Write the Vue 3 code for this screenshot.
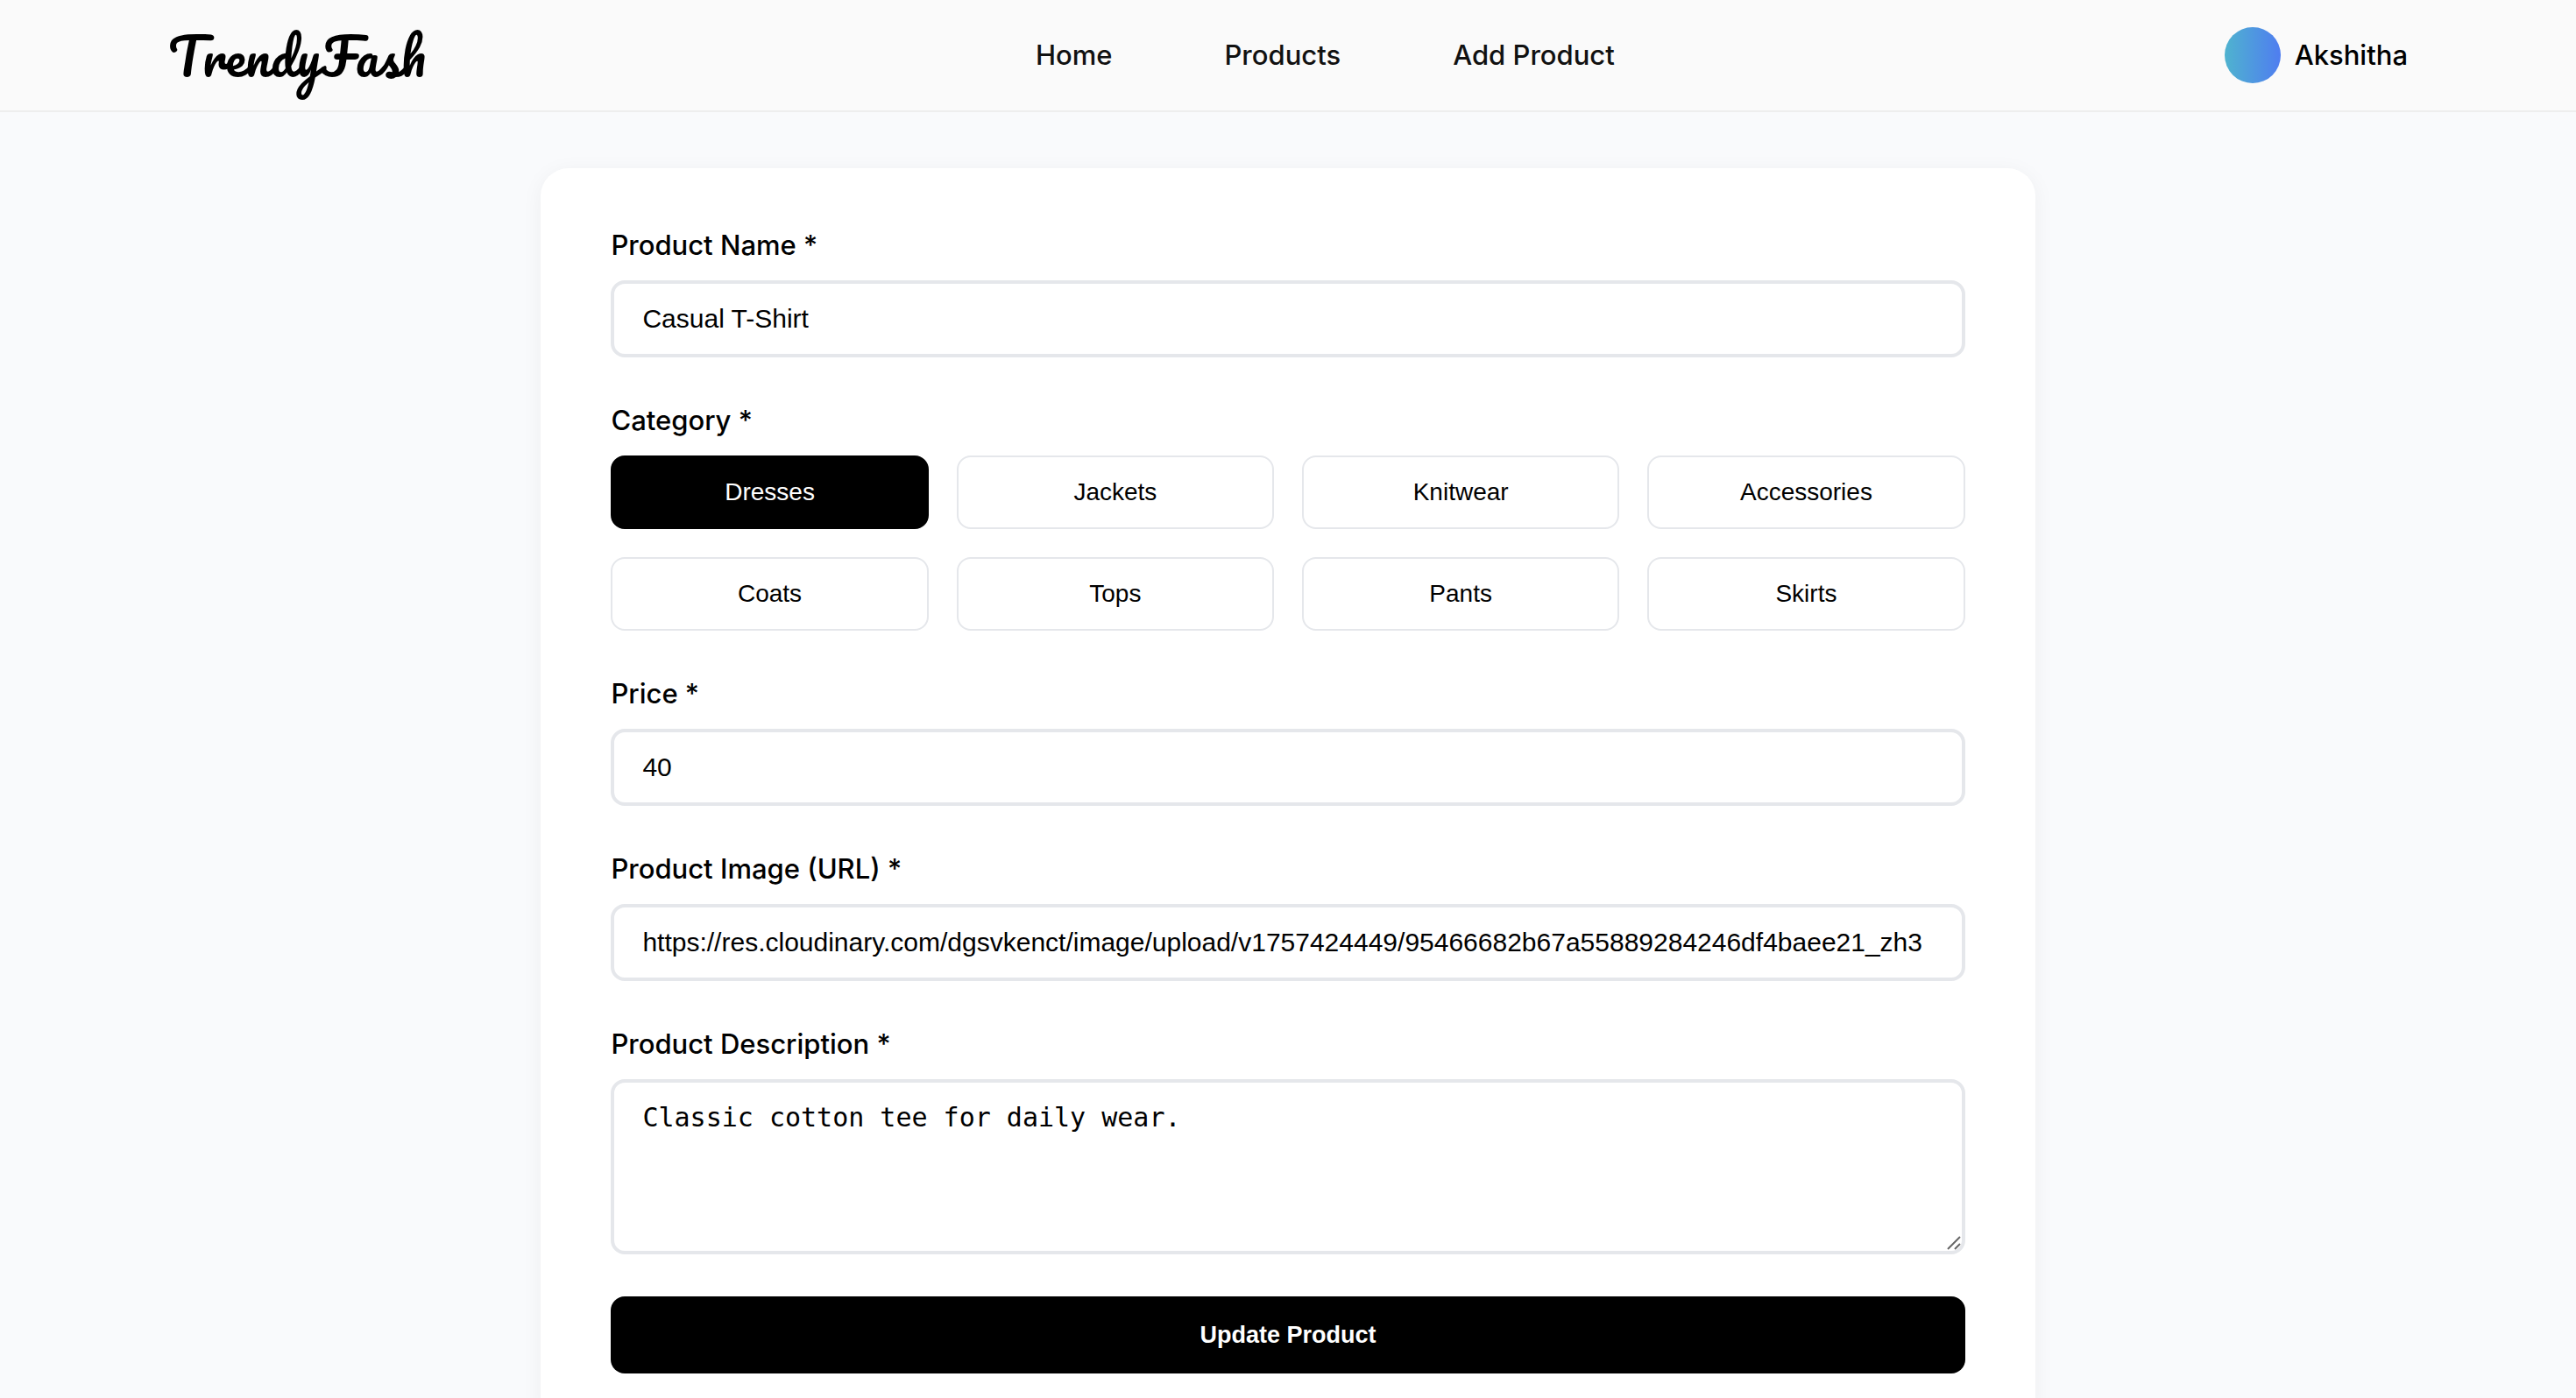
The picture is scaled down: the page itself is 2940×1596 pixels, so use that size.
<script setup>
import { ref } from 'vue'

const links = ['Home', 'Products', 'Add Product']
const categories = ['Dresses', 'Jackets', 'Knitwear', 'Accessories', 'Coats', 'Tops', 'Pants', 'Skirts']

const name = ref('Casual T-Shirt')
const category = ref('Dresses')
const price = ref('40')
const image = ref('https://res.cloudinary.com/dgsvkenct/image/upload/v1757424449/95466682b67a55889284246df4baee21_zh3')
const description = ref('Classic cotton tee for daily wear.')
</script>

<template>
  <div class="page">
    <header class="navbar">
      <a class="logo" href="#">TrendyFash</a>
      <nav class="links">
        <a v-for="link in links" :key="link" href="#">{{ link }}</a>
      </nav>
      <div class="user">
        <span class="avatar"></span>
        <span>Akshitha</span>
      </div>
    </header>

    <main class="content">
      <form class="card" @submit.prevent>
        <div class="field">
          <label for="name">Product Name *</label>
          <input id="name" v-model="name" class="control" type="text" />
        </div>

        <div class="field" role="group" aria-labelledby="category-label">
          <span id="category-label" class="label">Category *</span>
          <div class="categories">
            <button
              v-for="item in categories"
              :key="item"
              type="button"
              class="category"
              :class="{ active: item === category }"
              @click="category = item"
            >{{ item }}</button>
          </div>
        </div>

        <div class="field">
          <label for="price">Price *</label>
          <input id="price" v-model="price" class="control" type="text" inputmode="decimal" />
        </div>

        <div class="field">
          <label for="image">Product Image (URL) *</label>
          <input id="image" v-model="image" class="control" type="text" />
        </div>

        <div class="field">
          <label for="description">Product Description *</label>
          <div class="area-wrap">
            <textarea id="description" v-model="description" class="control area"></textarea>
            <svg class="grip" viewBox="0 0 16 16" aria-hidden="true">
              <path d="M1 15 15 1M9 15l6-6" />
            </svg>
          </div>
        </div>

        <button class="submit" type="submit">Update Product</button>
      </form>
    </main>
  </div>
</template>

<style>
body {
  margin: 0;
  background: #f9fafc;
}
</style>

<style scoped>
.page {
  min-height: 100vh;
  background: #f9fafc;
  color: #000;
  font-family: Inter, sans-serif;
  font-size: 31px;
  line-height: 48px;
}

.navbar {
  display: flex;
  align-items: center;
  justify-content: space-between;
  box-sizing: border-box;
  height: 128px;
  padding: 0 192px;
  background: #fafafa;
  border-bottom: 2px solid #eee;
}

.logo {
  color: #000;
  font-family: Pacifico, cursive;
  font-size: 58px;
  font-weight: 400;
  line-height: 96px;
  text-decoration: none;
}

.links {
  display: flex;
  gap: 128px;
}

.links a {
  color: #111;
  font-weight: 500;
  text-decoration: none;
}

.user {
  display: flex;
  align-items: center;
  gap: 16px;
  font-weight: 500;
}

.avatar {
  width: 64px;
  height: 64px;
  border-radius: 50%;
  background: linear-gradient(90deg, #4fb3cf, #4f7df0);
}

.content {
  padding: 64px 0;
}

.card {
  display: flex;
  flex-direction: column;
  gap: 48px;
  box-sizing: border-box;
  width: 58%;
  margin: 0 auto;
  padding: 64px 80px;
  background: #fff;
  border-radius: 32px;
  box-shadow: 0 4px 24px rgba(0, 0, 0, 0.05);
}

.field {
  display: flex;
  flex-direction: column;
  gap: 16px;
}

.field label,
.label {
  font-weight: 500;
}

.control {
  box-sizing: border-box;
  width: 100%;
  height: 88px;
  padding: 0 32px;
  color: #000;
  background: #fff;
  border: 4px solid #e5e7eb;
  border-radius: 16px;
  outline: none;
  font-family: "Liberation Sans", Arial, sans-serif;
  font-size: 30px;
}

.area-wrap {
  position: relative;
}

.area {
  display: block;
  height: 200px;
  padding: 22px 32px;
  font-family: "DejaVu Sans Mono", monospace;
  line-height: 36px;
  resize: vertical;
}

.area::-webkit-resizer {
  background: transparent;
}

.grip {
  position: absolute;
  right: 5px;
  bottom: 5px;
  width: 16px;
  height: 16px;
  fill: none;
  stroke: #666;
  stroke-width: 2;
  pointer-events: none;
}

.categories {
  display: grid;
  grid-template-columns: repeat(4, 1fr);
  gap: 32px;
}

.category {
  height: 84px;
  padding: 0;
  color: #000;
  background: #fff;
  border: 2px solid #e5e7eb;
  border-radius: 16px;
  font-family: "Liberation Sans", Arial, sans-serif;
  font-size: 28px;
}

.category.active {
  color: #fff;
  background: #000;
  border-color: #000;
}

.submit {
  height: 88px;
  padding: 0;
  color: #fff;
  background: #000;
  border: 0;
  border-radius: 16px;
  font-family: "Liberation Sans", Arial, sans-serif;
  font-size: 27px;
  font-weight: 700;
}
</style>
